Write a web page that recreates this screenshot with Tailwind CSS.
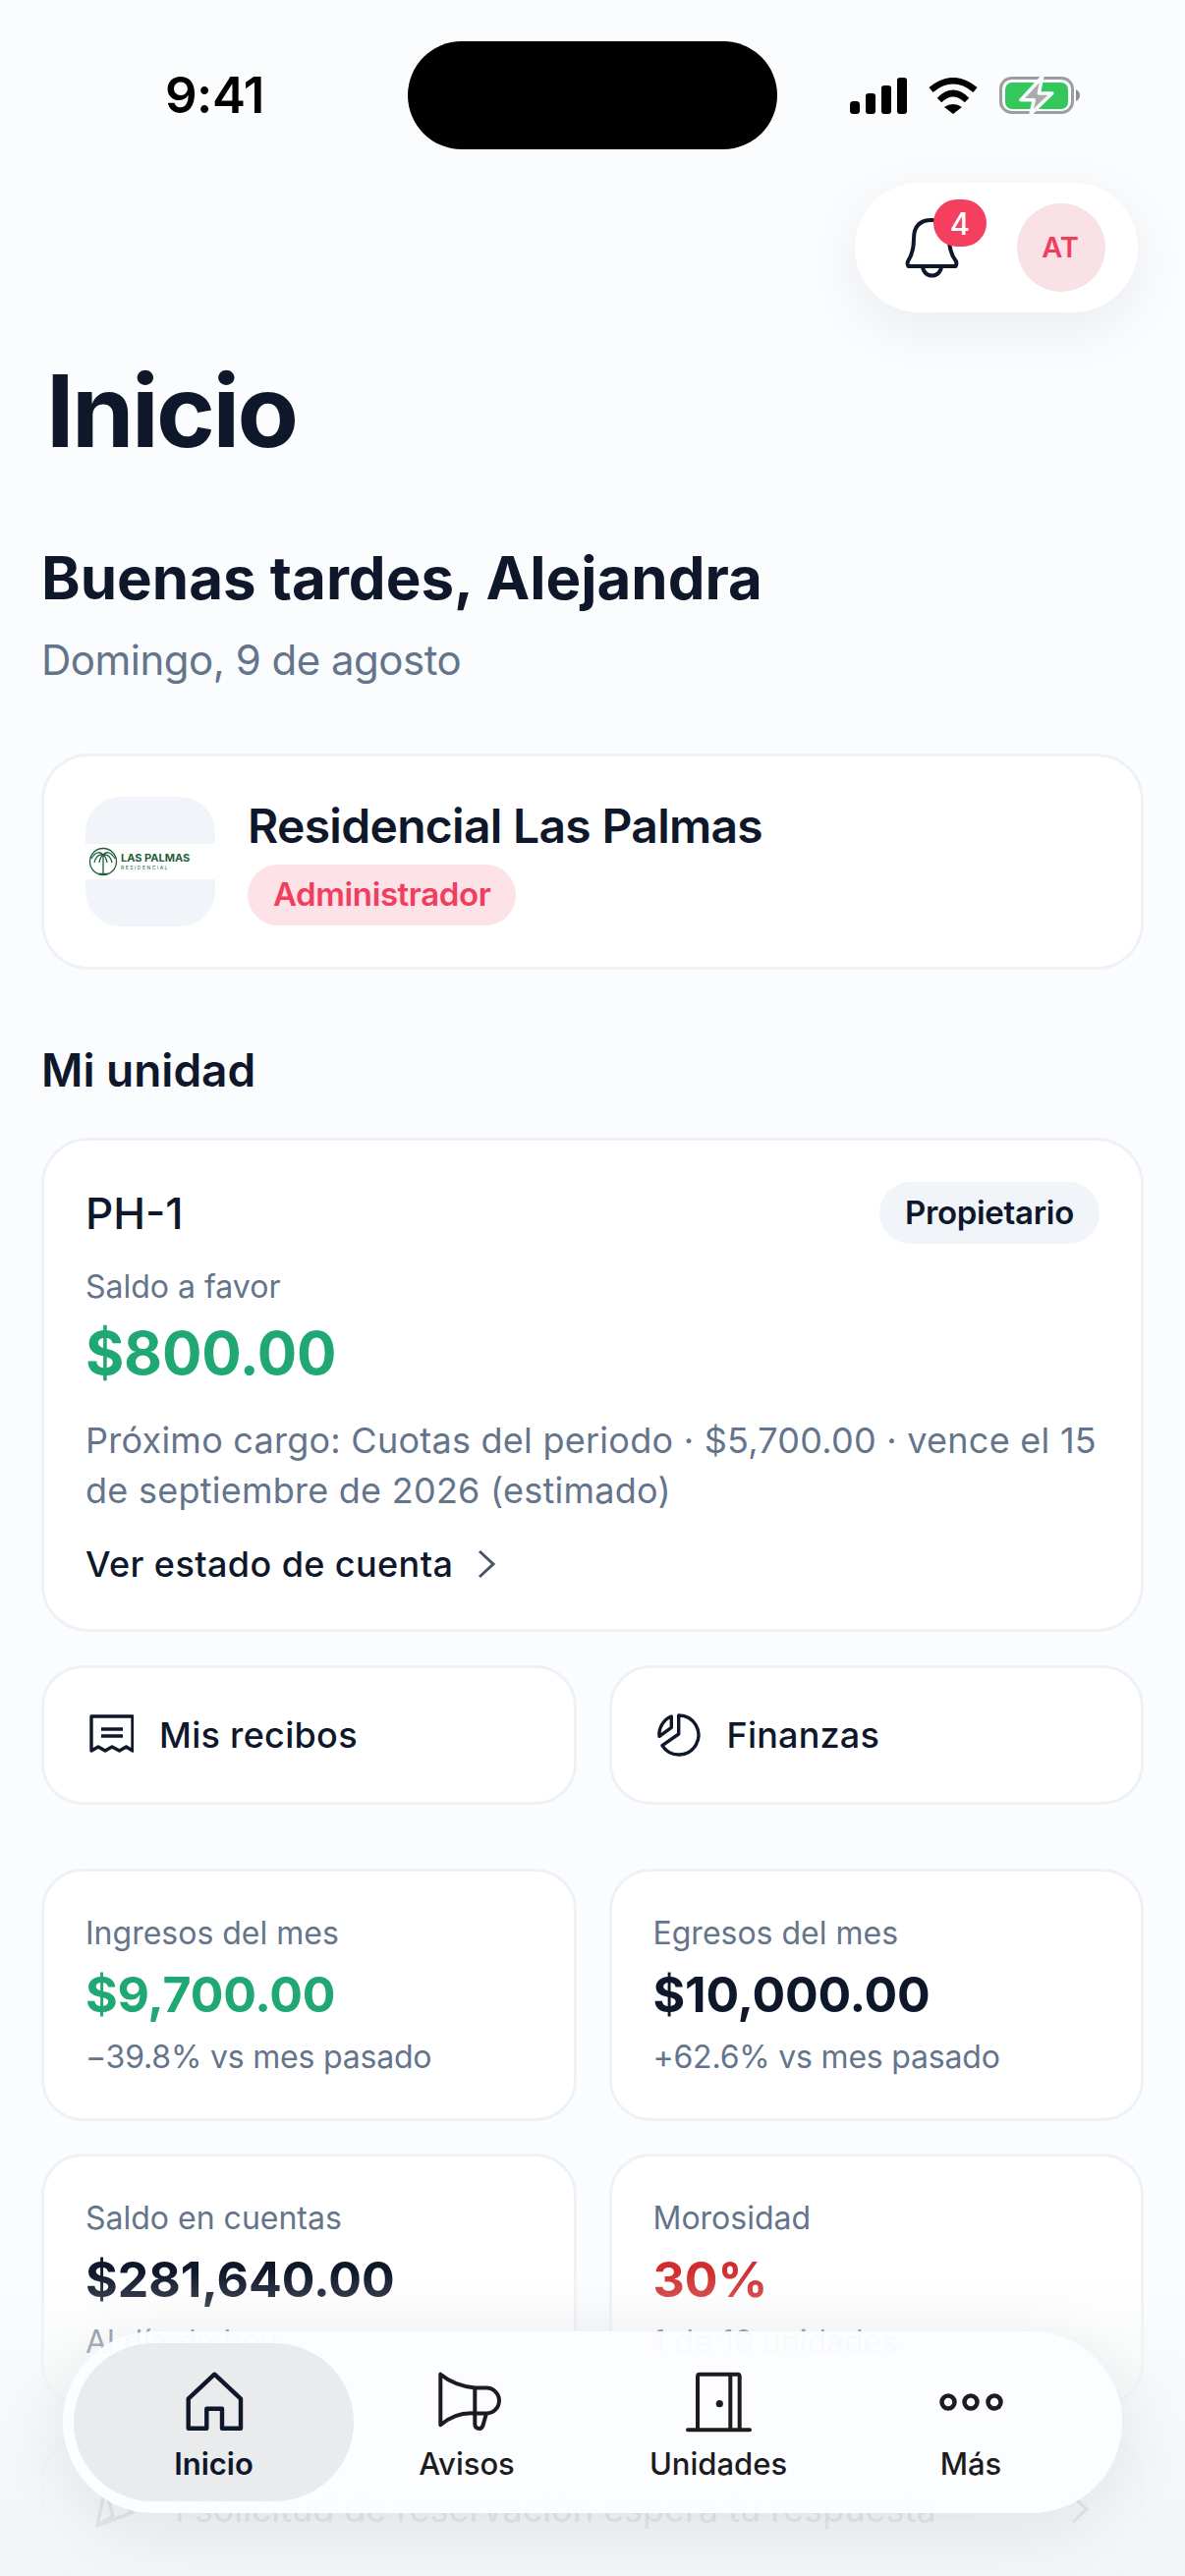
<!DOCTYPE html>
<html lang="es">
<head>
<meta charset="utf-8">
<script src="https://cdn.jsdelivr.net/npm/@tailwindcss/browser@4"></script>
<title>Inicio</title>
</head>
<body class="m-0">
<div class="relative w-[1206px] h-[2622px] overflow-hidden bg-[#fafcfe] font-['Inter',sans-serif] text-[#0f172a]">

  <!-- status bar -->
  <div class="relative h-[186px]">
    <span class="absolute left-[168px] top-[66px] text-[51px] leading-[62px] font-semibold text-black tracking-[-0.5px]">9:41</span>
    <div class="absolute left-[415px] top-[42px] w-[376px] h-[110px] rounded-full bg-black"></div>
    <div class="absolute left-[865px] top-[78px] flex items-start gap-[22px]">
      <svg width="58" height="38" viewBox="0 0 58 38" class="mt-[1px]"><rect x="0" y="24" width="10" height="13" rx="3.5" fill="#000"/><rect x="16" y="16" width="10" height="21" rx="3" fill="#000"/><rect x="32" y="8" width="10" height="29" rx="3" fill="#000"/><rect x="48" y="0" width="10" height="37" rx="3" fill="#000"/></svg>
      <svg width="50" height="38" viewBox="0 0 50 38" class="mt-[1px]"><path d="M2.5 12.5Q25 -6 47.5 12.5" fill="none" stroke="#000" stroke-width="6.5"/><path d="M11 23Q25 9 39 23" fill="none" stroke="#000" stroke-width="6.5"/><path d="M16 30Q25 24 34 30L25 37Z" fill="#000"/></svg>
      <svg width="84" height="40" viewBox="0 0 84 40" class="-mt-[1px]"><rect x="1.5" y="2.5" width="73" height="35" rx="11" fill="none" stroke="#9b9d9f" stroke-width="3"/><rect x="6" y="7" width="64" height="27" rx="7" fill="#34c759"/><path d="M78 14Q82 16 82 20Q82 24 78 26Z" fill="#8e8e93"/><path d="M43.7 1.3L22 24.7H35.3L32 39L53.7 18H40.3Z" fill="#a9acaf" stroke="#fafcfe" stroke-width="3.5" stroke-linejoin="round"/></svg>
    </div>
  </div>

  <div class="px-[42px]">
    <!-- top pill -->
    <div class="flex justify-end pr-[6px]">
      <div class="flex items-center w-[288px] h-[132px] pl-[48px] rounded-full bg-white shadow-[0_16px_60px_rgba(15,23,42,0.07)]">
        <div class="relative w-[60px] h-[66px] shrink-0">
          <svg width="60" height="66" viewBox="0 0 60 66"><path d="M6.5 52Q5 50 6 47Q12 38 12 24Q12 5 30 5Q48 5 48 24Q48 38 55 47Q56 50 54.5 52Z" fill="none" stroke="#0f172a" stroke-width="4" stroke-linejoin="round"/><path d="M21 52a9.5 9.5 0 0 0 19 0" fill="none" stroke="#0f172a" stroke-width="4"/></svg>
          <span class="absolute left-[32px] top-[-16px] flex items-center justify-center w-[54px] h-[48px] rounded-full bg-[#f43f5e] text-white text-[31px] font-medium leading-none">4</span>
        </div>
        <span class="ml-[57px] flex items-center justify-center w-[90px] h-[90px] rounded-full bg-[#f9e1e6] text-[#f03e5f] text-[29px] font-semibold pr-[2px]">AT</span>
      </div>
    </div>

    <h1 class="mt-[40px] ml-[5px] text-[102px] leading-[120px] font-bold tracking-[-2.6px]">Inicio</h1>
    <h2 class="mt-[74px] text-[60px] leading-[72px] font-bold">Buenas tardes, Alejandra</h2>
    <p class="mt-[21px] text-[42px] leading-[54px] text-[#64748b] tracking-[-0.5px]">Domingo, 9 de agosto</p>

    <!-- community card -->
    <div class="mt-[68px] h-[220px] flex items-center gap-[33px] rounded-[48px] border-[3px] border-[#eef2f6] bg-white pl-[42px]">
      <div class="w-[132px] h-[132px] rounded-[36px] bg-[#f1f5f9] overflow-hidden flex items-center shrink-0">
        <div class="w-full h-[36px] bg-white flex items-center gap-[3px] pl-[3px]">
          <svg width="30" height="32" viewBox="0 0 30 32" class="shrink-0"><circle cx="15" cy="16" r="13.5" fill="none" stroke="#1f5f3c" stroke-width="1.3"/><path d="M15 9V28M15 9Q9 3 3 13M15 9Q21 3 27 13M15 9Q8 8 6 17M15 9Q22 8 24 17M15 9Q12 11 11 17M15 9Q18 11 19 17M10 28.500H20" fill="none" stroke="#1f5f3c" stroke-width="1.3"/></svg>
          <div class="flex flex-col">
            <span class="text-[11px] leading-[13px] font-bold text-[#1f5f3c] whitespace-nowrap">LAS PALMAS</span>
            <span class="text-[5px] leading-[7px] tracking-[0.3em] text-[#1f5f3c] whitespace-nowrap">RESIDENCIAL</span>
          </div>
        </div>
      </div>
      <div class="flex flex-col items-start">
        <span class="text-[48px] leading-[58px] font-semibold tracking-[-0.7px]">Residencial Las Palmas</span>
        <span class="mt-[10px] h-[62px] flex items-center px-[26px] rounded-full bg-[#fde2e7] text-[#f03e5f] text-[33px] font-semibold tracking-[-0.4px]">Administrador</span>
      </div>
    </div>

    <h3 class="mt-[72px] text-[46px] leading-[60px] font-semibold">Mi unidad</h3>

    <!-- unit card -->
    <div class="mt-[39px] h-[503px] rounded-[48px] border-[3px] border-[#eef2f6] bg-white px-[42px] pt-[42px]">
      <div class="flex items-center justify-between h-[63px]">
        <span class="text-[44px] font-medium">PH-1</span>
        <span class="h-[63px] flex items-center px-[26px] rounded-full bg-[#f1f5f9] text-[33px] font-semibold tracking-[-0.3px]">Propietario</span>
      </div>
      <p class="mt-[20px] text-[32px] leading-[48px] text-[#64748b]">Saldo a favor</p>
      <p class="mt-[3px] text-[60px] leading-[80px] font-bold tracking-[-0.2px] text-[#1fa774]">$800.00</p>
      <p class="mt-[24px] text-[36px] leading-[51px] text-[#64748b] tracking-[0.25px]">Próximo cargo: Cuotas del periodo · $5,700.00 · vence el 15<br>de septiembre de 2026 (estimado)</p>
      <div class="mt-[22px] flex items-center gap-[24px] h-[54px]">
        <span class="text-[36px] font-medium tracking-[0.4px]">Ver estado de cuenta</span>
        <svg width="20" height="32" viewBox="0 0 20 32"><path d="M3 3L17 16L3 29" fill="none" stroke="#475569" stroke-width="3"/></svg>
      </div>
    </div>

    <!-- shortcuts -->
    <div class="mt-[34px] grid grid-cols-2 gap-[33px]">
      <div class="h-[142px] flex items-center gap-[26px] rounded-[42px] border-[3px] border-[#eef2f6] bg-white pl-[43px]">
        <svg width="48" height="48" viewBox="0 0 48 48"><path d="M5 40V5H47V40L40.5 36L33.5 40L26 36L19 40L12 36Z" fill="none" stroke="#0f172a" stroke-width="3.4" stroke-linejoin="round"/><path d="M15 18H37M15 25H37" stroke="#0f172a" stroke-width="3.4"/></svg>
        <span class="text-[36px] font-medium tracking-[0.3px]">Mis recibos</span>
      </div>
      <div class="h-[142px] flex items-center gap-[26px] rounded-[42px] border-[3px] border-[#eef2f6] bg-white pl-[43px]">
        <svg width="48" height="48" viewBox="16 12 48 48"><path d="M40.7 16A20 20 0 1 1 24 46.7L40.7 35Z" fill="none" stroke="#0f172a" stroke-width="3.4" stroke-linejoin="round"/><path d="M33.3 17A20 20 0 0 0 21 37.3L33.3 28.3Z" fill="none" stroke="#0f172a" stroke-width="3.4" stroke-linejoin="round"/></svg>
        <span class="text-[36px] font-medium tracking-[0.2px]">Finanzas</span>
      </div>
    </div>

    <!-- stats -->
    <div class="mt-[65px] grid grid-cols-2 gap-x-[33px] gap-y-[33px]">
      <div class="h-[257px] rounded-[42px] border-[3px] border-[#eef2f6] bg-white px-[42px] pt-[39px]">
        <p class="text-[32px] leading-[48px] text-[#64748b]">Ingresos del mes</p>
        <p class="mt-[5px] text-[50px] leading-[66px] font-bold tracking-[-0.2px] text-[#1fa774]">$9,700.00</p>
        <p class="mt-[7px] text-[32px] leading-[48px] text-[#64748b] tracking-[-0.2px]">−39.8% vs mes pasado</p>
      </div>
      <div class="h-[257px] rounded-[42px] border-[3px] border-[#eef2f6] bg-white px-[42px] pt-[39px]">
        <p class="text-[32px] leading-[48px] text-[#64748b]">Egresos del mes</p>
        <p class="mt-[5px] text-[50px] leading-[66px] font-bold tracking-[-0.2px]">$10,000.00</p>
        <p class="mt-[7px] text-[32px] leading-[48px] text-[#64748b] tracking-[-0.2px]">+62.6% vs mes pasado</p>
      </div>
      <div class="h-[257px] rounded-[42px] border-[3px] border-[#eef2f6] bg-white px-[42px] pt-[39px]">
        <p class="text-[32px] leading-[48px] text-[#64748b]">Saldo en cuentas</p>
        <p class="mt-[5px] text-[50px] leading-[66px] font-bold">$281,640.00</p>
        <p class="mt-[7px] text-[32px] leading-[48px] text-[#64748b]">Al día de hoy</p>
      </div>
      <div class="h-[257px] rounded-[42px] border-[3px] border-[#eef2f6] bg-white px-[42px] pt-[39px]">
        <p class="text-[32px] leading-[48px] text-[#64748b]">Morosidad</p>
        <p class="mt-[5px] text-[50px] leading-[66px] font-bold text-[#d12f2f]">30%</p>
        <p class="mt-[7px] text-[32px] leading-[48px] text-[#64748b]">1 de 10 unidades</p>
      </div>
    </div>

    <!-- pending request row -->
    <div class="mt-[34px] h-[142px] flex items-center gap-[32px] rounded-[42px] border-[3px] border-[#eef2f6] bg-white pl-[48px] pr-[52px]">
      <svg width="48" height="48" viewBox="0 0 48 48" class="shrink-0"><path d="M14 3L42 27L6 41Z M14 3L22 31L6 41" fill="none" stroke="#64748b" stroke-width="3.5" stroke-linejoin="round"/></svg>
      <span class="flex-1 text-[36px] text-[#64748b]">1 solicitud de reservación espera tu respuesta</span>
      <svg width="20" height="32" viewBox="0 0 20 32"><path d="M3 3L17 16L3 29" fill="none" stroke="#64748b" stroke-width="3"/></svg>
    </div>
  </div>

  <!-- bottom fade -->
  <div class="absolute inset-x-0 bottom-0 h-[310px] bg-gradient-to-b from-[#f5f7f8]/0 via-[#f5f7f8]/75 via-40% to-[#f3f4f5]/95"></div>

  <!-- tab bar -->
  <nav class="absolute left-[64px] bottom-[64px] w-[1078px] h-[185px] rounded-full bg-[#fcfdfe]/95 shadow-[0_14px_70px_rgba(15,23,42,0.09)] flex items-start pl-[11px] pt-[12px]">
    <div class="w-[285px] h-[161px] rounded-full bg-[#e9ebed] flex flex-col items-center pt-[27px]">
      <svg width="64" height="64" viewBox="0 0 64 64"><path d="M32.3 4.7L5.7 29.7V59.7H24.3V39.7H40V59.7H59V29.7Z" fill="none" stroke="#0f172a" stroke-width="4.4" stroke-linejoin="round"/></svg>
      <span class="mt-[10px] text-[31px] leading-[44px] font-semibold">Inicio</span>
    </div>
    <div class="w-[230px] flex flex-col items-center pt-[27px] text-[#1c1c1e]">
      <svg width="72" height="64" viewBox="-5 0 72 64"><path d="M4.3 4.7V56.3Q20 43 39.3 44.5H51A13 13 0 0 0 51 18.5H39.3Q18 16 4.3 4.7Z" fill="none" stroke="#1c1c1e" stroke-width="4" stroke-linejoin="round"/><path d="M39.3 18.5V55Q39.3 60 44 60Q47 60 48 55L51 44.5" fill="none" stroke="#1c1c1e" stroke-width="4" stroke-linejoin="round"/></svg>
      <span class="mt-[10px] text-[31px] leading-[44px] font-medium">Avisos</span>
    </div>
    <div class="w-[282px] flex flex-col items-center pt-[27px] text-[#1c1c1e]">
      <svg width="72" height="64" viewBox="-1 0 72 64"><path d="M14 61V7Q14 4.7 16 4.7H54.7Q56.7 4.7 56.7 7V61M47.3 4.7V61M4 61.3H67" fill="none" stroke="#1c1c1e" stroke-width="4" stroke-linecap="round"/><circle cx="36.3" cy="34.7" r="3.6" fill="#1c1c1e"/></svg>
      <span class="mt-[10px] text-[31px] leading-[44px] font-medium">Unidades</span>
    </div>
    <div class="w-[232px] flex flex-col items-center pt-[27px] text-[#1c1c1e]">
      <svg width="72" height="64" viewBox="0 0 72 64" fill="none" stroke="#1c1c1e" stroke-width="4.5"><circle cx="13" cy="33" r="6.5"/><circle cx="36" cy="33" r="6.5"/><circle cx="60" cy="33" r="6.5"/></svg>
      <span class="mt-[10px] text-[31px] leading-[44px] font-medium">Más</span>
    </div>
  </nav>
</div>
</body>
</html>
